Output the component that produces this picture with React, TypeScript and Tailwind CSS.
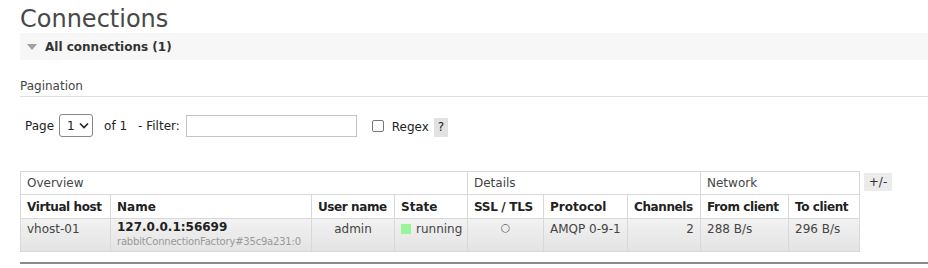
import React from "react";

const cell = "border border-[#d8d8d8] px-[6px] whitespace-nowrap overflow-visible";
const head = `${cell} text-left align-middle`;
const data = `${cell} align-top pt-[1px]`;

const App: React.FC = () => {
    return (
        <div className="min-h-[268px] bg-white pl-5 text-[12px] text-[#444]" style={{ fontFamily: '"DejaVu Sans", Verdana, sans-serif' }}>
            <h1 className="pt-[5px] text-[24px] leading-[28px] font-normal text-[#484848]">Connections</h1>

            <div className="flex h-[27px] items-center bg-[#f7f7f7] pl-[7px]">
                <svg width="10" height="6" viewBox="0 0 10 6" className="mr-[8px]">
                    <polygon points="0,0 10,0 5,6" fill="#a0a0a0" />
                </svg>
                <span className="font-bold text-[#333]">All connections (1)</span>
            </div>

            <div className="mt-[19px] border-b border-[#dedede] pb-[2px] leading-[15px]">Pagination</div>

            <div className="mt-[17px] flex items-center pl-[5px] text-[#222]">
                <span>Page</span>
                <div className="ml-[5px] flex h-[23px] w-[34px] items-center justify-between rounded-[3px] border border-[#888] pl-[7px] pr-[3px]">
                    <span>1</span>
                    <svg width="10" height="7" viewBox="0 0 10 7">
                        <polyline points="1,1.5 5,5.5 9,1.5" fill="none" stroke="#222" strokeWidth="1.6" />
                    </svg>
                </div>
                <span className="ml-[11px]">of 1</span>
                <span className="ml-[11px]">- Filter:</span>
                <div className="ml-[6px] h-[22px] w-[171px] border border-[#c4c4c4] bg-white" />
                <div className="ml-[15px] h-[12px] w-[12px] rounded-[2px] border border-[#767676] bg-white" />
                <span className="ml-[8px] mt-[3px]">Regex</span>
                <span className="ml-[5px] mt-[3px] flex h-[19px] w-[14px] items-center justify-center bg-[#e2e2e2]">?</span>
            </div>

            <div className="mt-[34px] flex items-start">
                <table className="w-[839px] table-fixed border-collapse">
                    <colgroup>
                        <col className="w-[90px]" />
                        <col className="w-[201px]" />
                        <col className="w-[83px]" />
                        <col className="w-[73px]" />
                        <col className="w-[76px]" />
                        <col className="w-[84px]" />
                        <col className="w-[73px]" />
                        <col className="w-[88px]" />
                        <col className="w-[71px]" />
                    </colgroup>
                    <thead>
                        <tr className="h-[23px] bg-white">
                            <th colSpan={4} className={`${head} font-normal`}>Overview</th>
                            <th colSpan={3} className={`${head} font-normal`}>Details</th>
                            <th colSpan={2} className={`${head} font-normal`}>Network</th>
                        </tr>
                        <tr className="h-[24px] bg-white text-[#222]">
                            <th className={`${head} font-bold tracking-[-0.4px]`}>Virtual host</th>
                            <th className={`${head} font-bold`}>Name</th>
                            <th className={`${head} font-bold tracking-[-0.4px]`}>User name</th>
                            <th className={`${head} font-bold`}>State</th>
                            <th className={`${head} font-bold tracking-[-0.3px]`}>SSL / TLS</th>
                            <th className={`${head} font-bold`}>Protocol</th>
                            <th className={`${head} font-bold tracking-[-0.4px]`}>Channels</th>
                            <th className={`${head} font-bold tracking-[-0.4px]`}>From client</th>
                            <th className={`${head} font-bold tracking-[-0.4px]`}>To client</th>
                        </tr>
                    </thead>
                    <tbody>
                        <tr className="h-[33px] bg-gradient-to-b from-[#f2f2f2] to-[#e3e3e3] text-[#444]">
                            <td className={`${data} text-left`}>vhost-01</td>
                            <td className={`${data} text-left`}>
                                <div className="font-bold leading-[15px] text-[#222]">127.0.0.1:56699</div>
                                <div className="text-[10px] leading-[13px] tracking-[-0.2px] text-[#999]">rabbitConnectionFactory#35c9a231:0</div>
                            </td>
                            <td className={`${data} text-center`}>admin</td>
                            <td className={`${data} text-left`}>
                                <span className="inline-flex items-center">
                                    <span className="mr-[5px] inline-block h-[10px] w-[10px] bg-[#98f598]" />
                                    running
                                </span>
                            </td>
                            <td className={`${data} text-center text-[11px] text-[#666]`}>○</td>
                            <td className={`${data} text-left`}>AMQP 0-9-1</td>
                            <td className={`${data} text-right`}>2</td>
                            <td className={`${data} text-left`}>288 B/s</td>
                            <td className={`${data} text-left`}>296 B/s</td>
                        </tr>
                    </tbody>
                </table>
                <span className="ml-[4px] mt-[2px] flex h-[18px] w-[28px] items-center justify-center bg-[#ebebeb] text-[#333]">+/-</span>
            </div>

            <div className="mt-[10px] h-[2px] bg-[#8a8a8a]" />
        </div>
    );
};

export default App;
